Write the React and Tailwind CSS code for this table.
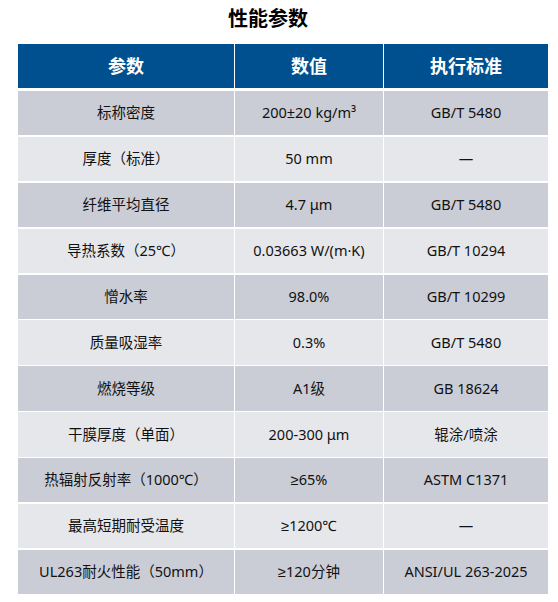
import React from 'react';

const rows = [
  ['标称密度', '200±20 kg/m³', 'GB/T 5480'],
  ['厚度（标准）', '50 mm', '—'],
  ['纤维平均直径', '4.7 μm', 'GB/T 5480'],
  ['导热系数（25℃）', '0.03663 W/(m·K)', 'GB/T 10294'],
  ['憎水率', '98.0%', 'GB/T 10299'],
  ['质量吸湿率', '0.3%', 'GB/T 5480'],
  ['燃烧等级', 'A1级', 'GB 18624'],
  ['干膜厚度（单面）', '200-300 μm', '辊涂/喷涂'],
  ['热辐射反射率（1000℃）', '≥65%', 'ASTM C1371'],
  ['最高短期耐受温度', '≥1200℃', '—'],
  ['UL263耐火性能（50mm）', '≥120分钟', 'ANSI/UL 263-2025'],
];

const font = { fontFamily: '"Noto Sans", "Liberation Sans", "Noto Sans CJK SC", sans-serif' };

export default function App() {
  return (
    <div className="w-[558px] h-[602px] bg-white overflow-hidden" style={font}>
      <h1 className="h-[44px] pt-[5px] pr-[22px] text-center text-[20px] font-bold text-black leading-[28px]">
        性能参数
      </h1>
      <div className="ml-[18px] w-[530px]">
        <div className="grid grid-cols-[216px_148px_164px] gap-x-px h-[44px] bg-white">
          {['参数', '数值', '执行标准'].map((h) => (
            <div key={h} className="bg-[#00508f] flex items-center justify-center text-white text-[18px] font-bold">
              {h}
            </div>
          ))}
        </div>
        <div className="mt-[3px] flex flex-col gap-y-[1.6px]">
          {rows.map((r, i) => (
            <div key={i} className="grid grid-cols-[216px_148px_164px] gap-x-px h-[44.3px]">
              {r.map((c, j) => (
                <div
                  key={j}
                  className={`flex items-center justify-center text-[14.5px] text-[#111111] ${i % 2 === 0 ? 'bg-[#cbcdd6]' : 'bg-[#e6e7eb]'}`}
                >
                  {c}
                </div>
              ))}
            </div>
          ))}
        </div>
      </div>
    </div>
  );
}
